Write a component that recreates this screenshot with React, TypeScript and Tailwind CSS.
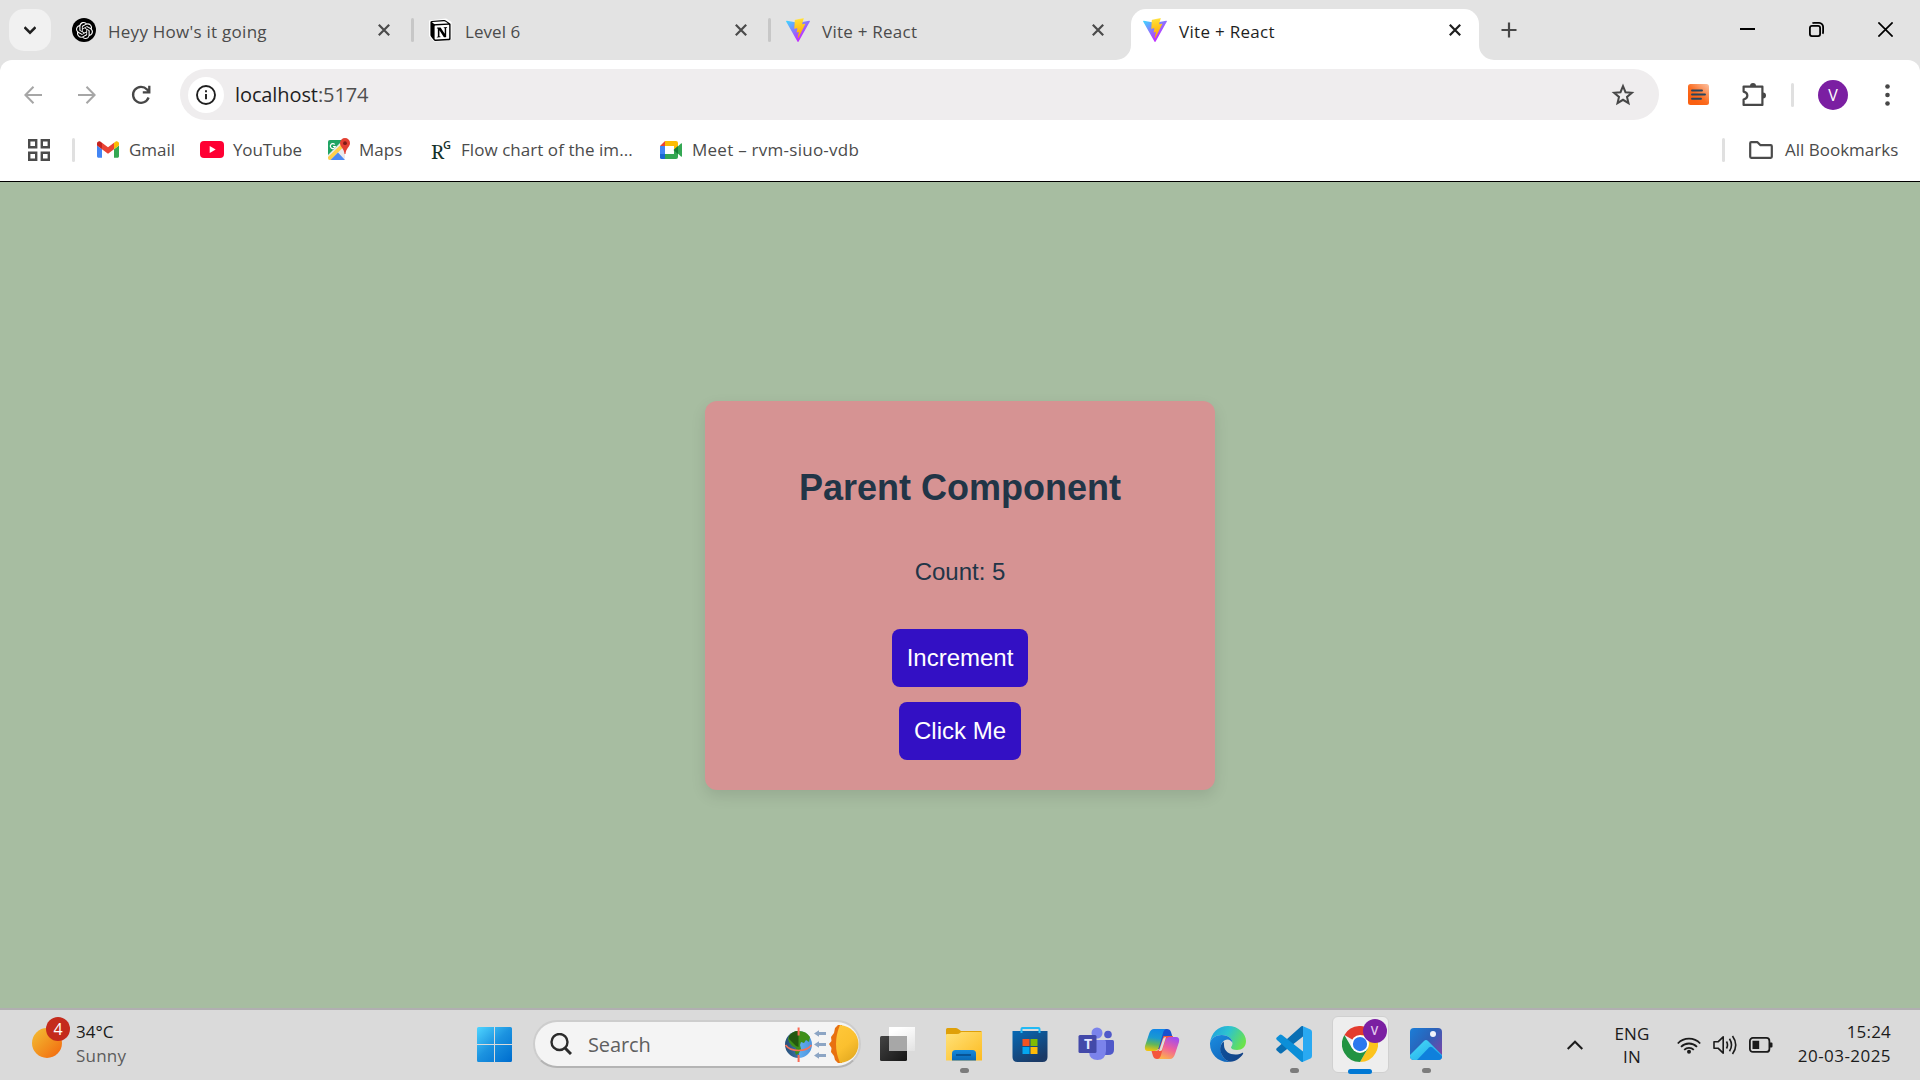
import React, { useState } from "react";
import { SiOpenai, SiNotion } from "react-icons/si";

type IconProps = { className?: string };

const ViteLogo = ({ id }: { id: string }) => (
  <svg className="size-6 shrink-0" viewBox="0 0 256 257">
    <defs>
      <linearGradient id={`${id}a`} x1="0" x2=".58" y1=".08" y2=".8">
        <stop offset="0" stopColor="#41D1FF" />
        <stop offset="1" stopColor="#BD34FE" />
      </linearGradient>
      <linearGradient id={`${id}b`} x1=".43" x2=".5" y1=".02" y2=".9">
        <stop offset="0" stopColor="#FFEA83" />
        <stop offset=".083" stopColor="#FFDD35" />
        <stop offset="1" stopColor="#FFA800" />
      </linearGradient>
    </defs>
    <path fill={`url(#${id}a)`} d="M255.153 37.938L134.897 252.976c-2.483 4.44-8.862 4.466-11.382.048L.875 37.958c-2.746-4.814 1.371-10.646 6.827-9.67l120.385 21.517a6.537 6.537 0 0 0 2.322-.004l117.867-21.483c5.438-.991 9.574 4.796 6.877 9.62Z" />
    <path fill={`url(#${id}b)`} d="M185.432.063L96.44 17.501a3.268 3.268 0 0 0-2.634 3.014l-5.474 92.456a3.268 3.268 0 0 0 3.997 3.378l24.777-5.718c2.318-.535 4.413 1.507 3.936 3.838l-7.361 36.047c-.495 2.426 1.782 4.5 4.151 3.78l15.304-4.649c2.372-.72 4.652 1.36 4.15 3.788l-11.698 56.621c-.732 3.542 3.979 5.473 5.943 2.437l1.313-2.028l72.516-144.72c1.215-2.423-.88-5.186-3.54-4.672l-25.505 4.922c-2.396.462-4.435-1.77-3.759-4.114l16.646-57.705c.677-2.35-1.37-4.583-3.769-4.113Z" />
  </svg>
);

const OpenAiBadge = () => (
  <span className="flex size-6 shrink-0 items-center justify-center rounded-full bg-black">
    <SiOpenai className="size-[17px] text-white" />
  </span>
);

const NotionBadge = () => (
  <span className="relative flex size-6 shrink-0 items-center justify-center">
    <svg className="absolute inset-0 size-6" viewBox="0 0 24 24">
      <path d="M0 2.500 17 .5l5.500 3.500v17L18 22.900 5 23.500 0 18z" fill="#fff" />
    </svg>
    <SiNotion className="relative -left-px size-[21px] text-black" />
  </span>
);

const Cross = ({ className }: IconProps) => (
  <svg className={className} viewBox="0 0 12 12" fill="none" stroke="currentColor" strokeWidth="2.2">
    <path d="M.8.8l10.4 10.4M11.2.8L.8 11.2" />
  </svg>
);

const Tab = ({ icon, title, titleClass, active = false }: { icon: React.ReactNode; title: string; titleClass: string; active?: boolean }) => (
  <div className={active ? "relative flex h-[51px] w-[348px] items-start rounded-t-[15px] bg-white px-3 pt-[9px] text-[#1f1f1f]" : "relative flex h-[51px] w-[348px] items-start px-3 pt-[9px] text-[#4b4b4b]"}>
    {active && (
      <>
        <svg className="absolute bottom-0 -left-[15px] size-[15px]" viewBox="0 0 15 15"><path d="M15 0v15H0A15 15 0 0 0 15 0z" fill="#fff" /></svg>
        <svg className="absolute -right-[15px] bottom-0 size-[15px]" viewBox="0 0 15 15"><path d="M0 0v15h15A15 15 0 0 1 0 0z" fill="#fff" /></svg>
      </>
    )}
    {icon}
    <span className={`mt-0.5 ml-3 grow text-[17px] leading-6 whitespace-nowrap ${titleClass}`}>{title}</span>
    <Cross className="mt-1.5 mr-1.5 size-3 shrink-0" />
  </div>
);

const TabSeparator = () => <div className="mx-[3px] mt-[9px] h-6 w-[3px] rounded-full bg-[#c7c7c7]" />;

const TabStrip = () => (
  <div className="flex h-[60px] bg-[#e3e3e3] pt-[9px] pl-[9px]">
    <div className="mr-[9px] flex size-[42px] items-center justify-center rounded-[15px] bg-[#f1f1f1]">
      <svg className="size-3 text-[#1f1f1f]" viewBox="0 0 12 12" fill="none" stroke="currentColor" strokeWidth="2.4"><path d="M.5 3.2L6 8.7l5.500-5.500" /></svg>
    </div>
    <Tab icon={<OpenAiBadge />} title="Heyy How's it going" titleClass="tracking-[0.26px]" />
    <TabSeparator />
    <Tab icon={<NotionBadge />} title="Level 6" titleClass="tracking-[0.05px]" />
    <TabSeparator />
    <Tab icon={<ViteLogo id="v1" />} title="Vite + React" titleClass="tracking-[0.25px]" />
    <div className="w-[9px]" />
    <Tab active icon={<ViteLogo id="v2" />} title="Vite + React" titleClass="tracking-[0.3px]" />
    <svg className="mt-[13px] ml-[22px] size-4 text-[#474747]" viewBox="0 0 16 16" stroke="currentColor" strokeWidth="2.2"><path d="M8 .5v15M.5 8h15" /></svg>
    <div className="ml-auto flex items-start gap-[54px] pt-[13px] pr-[27px] text-black">
      <svg className="size-[15px]" viewBox="0 0 15 15" stroke="currentColor" strokeWidth="2"><path d="M0 7h15" /></svg>
      <svg className="size-[15px]" viewBox="0 0 15 15" fill="none" stroke="currentColor" strokeWidth="1.8"><rect x=".9" y="3.900" width="10.200" height="10.200" rx="2" /><path d="M3.400 1.200C4 .9 4.500.9 5 .9h5a4 4 0 0 1 4.100 4.100v5c0 .6-.1 1.100-.5 1.700" /></svg>
      <svg className="size-[15px]" viewBox="0 0 15 15" fill="none" stroke="currentColor" strokeWidth="1.700"><path d="M.4.4l14.200 14.200M14.600.4L.4 14.600" /></svg>
    </div>
  </div>
);

const Arrow = ({ className }: IconProps) => (
  <svg className={className} viewBox="0 0 18 18" fill="none" stroke="currentColor" strokeWidth="2"><path d="M18 9H1.500M9.500.8L1.400 9l8.100 8.200" /></svg>
);

const Toolbar = () => (
  <div className="flex h-[69px] items-center pt-[9px] pb-[9px] pl-6">
    <Arrow className="size-[18px] text-[#a6a6a6]" />
    <Arrow className="ml-[36px] size-[18px] rotate-180 text-[#a6a6a6]" />
    <svg className="ml-[35px] size-5 text-[#474747]" viewBox="0 0 20 20" fill="none" stroke="currentColor" strokeWidth="2.300"><path d="M17.600 12.500A8 8 0 1 1 16 4.400L18 6.500M18.300.8v6.500h-6.500" /></svg>
    <div className="ml-[29px] flex h-[51px] w-[1479px] items-center rounded-full bg-[#efedee] pr-6 pl-2">
      <div className="flex size-9 items-center justify-center rounded-full bg-white">
        <svg className="size-5 text-[#1f1f1f]" viewBox="0 0 20 20" fill="none" stroke="currentColor" strokeWidth="1.900"><circle cx="10" cy="10" r="9" /><path d="M10 9v5.300M10 5.300v2" /></svg>
      </div>
      <div className="ml-[11px] text-[20px] leading-6 tracking-[-0.1px] whitespace-nowrap text-[#1f1f1f]">
        localhost<span className="text-[#4f4f4f]">:5174</span>
      </div>
      <svg className="ml-auto size-6 text-[#474747]" viewBox="0 0 24 24" fill="none" stroke="currentColor" strokeWidth="2"><path d="M12 3.200l2.500 6 6.400.5-4.900 4.200 1.500 6.300-5.500-3.400-5.500 3.400 1.500-6.300-4.900-4.200 6.400-.5z" /></svg>
    </div>
    <svg className="ml-[29px] size-[21px]" viewBox="0 0 21 21">
      <defs><linearGradient id="ext" x1="1" y1="0" x2=".3" y2=".8"><stop stopColor="#fcc3a4" /><stop offset=".7" stopColor="#fb6b1f" /><stop offset="1" stopColor="#fa6011" /></linearGradient></defs>
      <rect width="21" height="21" rx="2.500" fill="url(#ext)" />
      <path d="M4 6.500h10M4 10.500h13M4 14.800h9" stroke="#27455f" strokeWidth="1.900" strokeLinecap="round" />
    </svg>
    <svg className="ml-8 h-6 w-[26px] text-[#474747]" viewBox="0 0 26 24" fill="none" stroke="currentColor" strokeWidth="2.200">
      <path d="M2.600 3.600h18.800v18.300H2.600v-5.400c5-1.300 5-6.600 0-7.900z" strokeLinejoin="round" />
      <path d="M9 3a3 3 0 0 1 6 0zM22 9.500a3 3 0 0 1 0 6z" fill="currentColor" stroke="none" />
    </svg>
    <div className="ml-[24px] h-6 w-[3px] rounded-full bg-[#e0e0e0]" />
    <div className="ml-6 flex size-[30px] items-center justify-center rounded-full bg-[#7b1fa2] text-[16px] text-white">V</div>
    <svg className="ml-[37px] h-[22px] w-[5px]" viewBox="0 0 5 22" fill="#474747"><circle cx="2.500" cy="2.500" r="2.300" /><circle cx="2.500" cy="11" r="2.300" /><circle cx="2.500" cy="19.500" r="2.300" /></svg>
  </div>
);

const Bookmark = ({ icon, label, labelClass, className }: { icon: React.ReactNode; label: string; labelClass: string; className: string }) => (
  <div className={`flex shrink-0 items-center ${className}`}>
    {icon}
    <span className={`whitespace-nowrap ${labelClass}`}>{label}</span>
  </div>
);

const GmailIcon = () => (
  <svg className="mr-2.5 h-[17px] w-[22px]" viewBox="52 42 88 66">
    <path fill="#4285f4" d="M58 108h14V74L52 59v43c0 3.320 2.690 6 6 6" /><path fill="#34a853" d="M120 108h14c3.320 0 6-2.690 6-6V59l-20 15" />
    <path fill="#fbbc04" d="M120 48v26l20-15v-8c0-7.420-8.470-11.650-14.400-7.200" /><path fill="#ea4335" d="M72 74V48l24 18 24-18v26L96 92" />
    <path fill="#c5221f" d="M52 51v8l20 15V48l-5.600-4.200c-5.940-4.450-14.400-.22-14.400 7.200" />
  </svg>
);

const YouTubeIcon = () => (
  <svg className="mr-[9px] h-[17px] w-6" viewBox="0 0 24 17"><rect width="24" height="17" rx="4" fill="#ff0033" /><path d="M9.700 5v7l6-3.500z" fill="#fff" /></svg>
);

const MapsIcon = () => (
  <svg className="mr-[9px] size-[23px]" viewBox="0 0 23 23">
    <path d="M1 4a2 2 0 0 1 2-2h15v17a3 3 0 0 1-3 3H3a2 2 0 0 1-2-2z" fill="#e8eaed" />
    <path d="M1 4a2 2 0 0 1 2-2h13L1 17z" fill="#1fa463" /><path d="M1 19L15.500 5l2.500 2.500L3.500 22H3a2 2 0 0 1-2-2z" fill="#fdd04b" />
    <path d="M3.500 22l7.500-7.500 7 7.500z" fill="#4a89f3" />
    <path d="M18 0a5 5 0 0 1 5 5c0 4-4 5-4.500 11h-1C17 10 13 9 13 5a5 5 0 0 1 5-5z" fill="#e34133" /><circle cx="18" cy="5.200" r="1.900" fill="#7f1d17" />
    <path d="M7.800 6.500A2.500 2.500 0 1 0 8.300 8.500H6" fill="none" stroke="#fff" strokeWidth="1.200" />
  </svg>
);

const MeetIcon = () => (
  <svg className="mr-2.5 h-[18px] w-[22px]" viewBox="0 0 22 18">
    <path d="M0 5h5v8H0z" fill="#4285f4" /><path d="M0 5l5-5v5z" fill="#ea4335" /><path d="M5 0h11a2 2 0 0 1 2 2v5l-4 2V5H5z" fill="#fbbc04" />
    <path d="M0 13h5v5H1.500A1.500 1.500 0 0 1 0 16.500z" fill="#1967d2" /><path d="M5 13h9V9l4 2v5a2 2 0 0 1-2 2H5z" fill="#34a853" />
    <path d="M14 9l7-6.500c.5-.4 1-.2 1 .5v12c0 .7-.5.900-1 .5z" fill="#34a853" /><path d="M13.500 9L18 5v8z" fill="#188038" />
  </svg>
);

const BookmarksBar = () => (
  <div className="flex h-[52px] items-center pb-[11px] pl-7 text-[17px] leading-6 text-[#4b4b4b]">
    <svg className="size-[22px]" viewBox="0 0 22 22" fill="none" stroke="currentColor" strokeWidth="2.400"><path d="M1.200 1.200h7v7h-7zM13.800 1.200h7v7h-7zM1.200 13.800h7v7h-7zM13.800 13.800h7v7h-7z" /></svg>
    <div className="ml-[22px] h-6 w-[3px] rounded-full bg-[#e0e0e0]" />
    <Bookmark className="ml-[22px] w-[103px]" icon={<GmailIcon />} label="Gmail" labelClass="tracking-[0px]" />
    <Bookmark className="w-[127px]" icon={<YouTubeIcon />} label="YouTube" labelClass="tracking-[-0.15px]" />
    <Bookmark className="w-[104px]" icon={<MapsIcon />} label="Maps" labelClass="tracking-[0px]" />
    <Bookmark
      className="w-[229px]"
      icon={
        <span className="mr-3 flex h-6 w-[18px] font-['Noto_Serif','DejaVu_Serif','Liberation_Serif',serif] text-[#14302a]">
          <span className="mt-[2px] w-3 text-[20px]">R</span>
          <span className="-mt-[5px] font-['Open_Sans',sans-serif] text-[11px] font-semibold">G</span>
        </span>
      }
      label="Flow chart of the im..."
      labelClass="tracking-[0.05px]"
    />
    <Bookmark className="w-[220px]" icon={<MeetIcon />} label="Meet – rvm-siuo-vdb" labelClass="tracking-[0.26px]" />
    <div className="mr-6 ml-auto h-6 w-[3px] rounded-full bg-[#e0e0e0]" />
    <div className="flex w-[171px] items-center">
      <svg className="mr-3 h-[18px] w-6" viewBox="0 0 24 18" fill="none" stroke="currentColor" strokeWidth="2.200" strokeLinejoin="round"><path d="M1.200 2.200q0-1 1-1h6.300l3 3h10.300q1 0 1 1v10.600q0 1-1 1H2.200q-1 0-1-1z" /></svg>
      <span className="tracking-[0px] whitespace-nowrap">All Bookmarks</span>
    </div>
  </div>
);

const Page = () => {
  const [count, setCount] = useState(5);
  return (
    <main className="flex grow justify-center bg-[#a7bda1] font-['Liberation_Sans',Arial,sans-serif] text-[24px] text-[#213547]">
      <section className="mt-[219px] flex h-[389px] w-[510px] flex-col items-center rounded-xl bg-[#d69393] pt-[60px] shadow-[0_6px_15px_rgba(0,0,0,0.1)]">
        <h2 className="text-[36px] leading-[54px] font-bold">Parent Component</h2>
        <p className="mt-[39px] leading-9">Count: {count}</p>
        <button onClick={() => setCount(count + 1)} className="mt-[39px] flex h-[58px] items-center rounded-lg bg-[#3310c4] px-[15px] text-white">Increment</button>
        <button className="mt-[15px] flex h-[58px] items-center rounded-lg bg-[#3310c4] px-[15px] text-white">Click Me</button>
      </section>
    </main>
  );
};

const WindowsIcon = () => (
  <svg className="size-[35px]" viewBox="0 0 35 35">
    <defs><linearGradient id="win" gradientUnits="userSpaceOnUse" x1="0" y1="0" x2="32" y2="35"><stop stopColor="#4fd5ff" /><stop offset=".5" stopColor="#1c93e0" /><stop offset="1" stopColor="#006fcf" /></linearGradient></defs>
    <path fill="url(#win)" d="M1.500 0H17v17H0V1.500A1.500 1.500 0 0 1 1.500 0zM18 0h15.500A1.500 1.500 0 0 1 35 1.500V17H18zM0 18h17v17H1.500A1.500 1.500 0 0 1 0 33.500zM18 18h17v15.500a1.500 1.500 0 0 1-1.500 1.500H18z" />
  </svg>
);

const SearchArt = () => (
  <svg className="h-10 w-[74px]" viewBox="0 0 74 40">
    <defs>
      <linearGradient id="sea"><stop stopColor="#254d76" /><stop offset=".5" stopColor="#3d73a8" /><stop offset=".52" stopColor="#63aef0" /><stop offset="1" stopColor="#4b93dd" /></linearGradient>
      <linearGradient id="sun" x1="0" y1="0" x2=".5" y2="1"><stop stopColor="#ffc83a" /><stop offset=".6" stopColor="#fbc02f" /><stop offset="1" stopColor="#e6ac22" /></linearGradient>
    </defs>
    <circle cx="13.500" cy="20.500" r="13.500" fill="url(#sea)" />
    <path d="M4 12q4-5 9-5 8-.5 12 6l-1 5-3-2-2 3-3-1-1 3 1 4-2 4-3 2-1-3 1-4-4-2-3-4-1-3z" fill="#3f8f1a" />
    <path d="M4 12q4-5 9.500-5v16l-2.500-1-3-3-4-4z" fill="#24580f" />
    <path d="M13.600 3.500v8M13.600 31v7" stroke="#fb6a55" strokeWidth="2" /><path d="M.5 21q4 5.500 13 5.500t13-5.500" fill="none" stroke="#f4735a" strokeWidth="1.700" />
    <path d="M29 9.500l5-3.200v1.700h7v3h-7v1.700zM29 20.500l5-3.200V19h7v3h-7v1.700zM29 31.500l5-3.200V30h7v3h-7v1.700z" fill="#8ca5c4" />
    <path d="M53 1l-3 3-1 5-3 4 .5 4-2.500 3 2.500 4-.5 4 3 4 1 4 3 3h4V1z" fill="#e8710f" />
    <path d="M55 1C66 2 73.500 10 73.500 20S66 38 55 39Q47 20 55 1z" fill="url(#sun)" />
  </svg>
);

const TaskViewIcon = () => (
  <svg className="size-9" viewBox="0 0 36 36">
    <defs><linearGradient id="tv" x2="1" y2="1"><stop stopColor="#444" /><stop offset="1" stopColor="#151515" /></linearGradient><linearGradient id="tw" x1=".5" x2="1" y2="1"><stop stopColor="#fff" /><stop offset="1" stopColor="#e2e2e2" /></linearGradient></defs>
    <rect y="10" width="27" height="25" rx="1.500" fill="url(#tv)" /><path d="M9 1h26v24H9z" fill="url(#tw)" /><path d="M9 10h18v15H9z" fill="#a7a7a7" />
  </svg>
);

const ExplorerIcon = () => (
  <svg className="size-9" viewBox="0 0 36 36">
    <defs><linearGradient id="fo" x2="1" y2="1"><stop stopColor="#ffe27a" /><stop offset="1" stopColor="#fdbb20" /></linearGradient><linearGradient id="fb" x2="0" y2="1"><stop stopColor="#1489dd" /><stop offset="1" stopColor="#0a68b5" /></linearGradient></defs>
    <path d="M0 3.500Q0 2 1.500 2H10q1.500 0 3 1.500L15 5h19.500Q36 5 36 6.500V12H0z" fill="#dfa008" />
    <path d="M0 9q0-1 1-1h10q2 0 3.500-1.500L15.500 6H36v28.500H0z" fill="url(#fo)" />
    <path d="M6 34.500V27.500q0-3.500 3.500-3.500h17q3.500 0 3.500 3.500v7z" fill="url(#fb)" /><path d="M10 29h15" stroke="#07508f" strokeWidth="1.800" />
  </svg>
);

const StoreIcon = () => (
  <svg className="size-9" viewBox="0 0 36 36">
    <defs><linearGradient id="st" x2=".6" y2="1"><stop stopColor="#0669b6" /><stop offset="1" stopColor="#1b3a66" /></linearGradient></defs>
    <path d="M.5 5h35v26q0 5-5 5h-25q-5 0-5-5z" fill="url(#st)" /><path d="M9.500 7V3q0-1 1-1h16q1 0 1 1v4" fill="none" stroke="#22baf5" strokeWidth="2" />
    <path fill="#f35321" d="M10.500 13h7v7h-7z" /><path fill="#80bb03" d="M18.500 13h7v7h-7z" /><path fill="#05a6f0" d="M10.500 21h7v7h-7z" /><path fill="#ffba08" d="M18.500 21h7v7h-7z" />
  </svg>
);

const TeamsIcon = () => (
  <div className="relative size-9">
    <svg className="size-9" viewBox="0 0 36 36">
      <circle cx="30" cy="8.500" r="3.800" fill="#5059c9" /><path d="M25 14h9.500q1.500 0 1.500 1.500V24q0 5-6 5h-5z" fill="#5059c9" />
      <circle cx="19" cy="7" r="5.500" fill="#7b83eb" /><path d="M11 14h15.500q1.500 0 1.500 1.500V25q-.5 9-8.500 9T11 26z" fill="#7b83eb" />
      <rect x=".5" y="9" width="18" height="18" rx="1.500" fill="#4349a9" />
    </svg>
    <span className="absolute top-[9px] left-px w-[18px] text-center text-[14px] leading-[18px] font-bold text-[#e4e6ff]">T</span>
  </div>
);

const CopilotIcon = () => (
  <svg className="size-9" viewBox="0 0 36 36">
    <defs>
      <linearGradient id="c1" x1=".5" x2=".35" y2="1"><stop stopColor="#0f86e8" /><stop offset=".4" stopColor="#1a9ad0" /><stop offset=".7" stopColor="#62b75a" /><stop offset="1" stopColor="#f0c50c" /></linearGradient>
      <linearGradient id="c2" x1=".7" x2=".3" y2="1"><stop stopColor="#a04cf0" /><stop offset=".5" stopColor="#f0609a" /><stop offset="1" stopColor="#fdb24c" /></linearGradient>
    </defs>
    <path d="M14 3h9q3 0 4 3l1.500 5h-4q-3 0-4 3l-3 9H7.500z" fill="#1850cf" />
    <path d="M22 33h-9q-3 0-4-3l-1.500-5h4q3 0 4-3l4-12H29z" fill="#f4553c" />
    <path d="M10 3h13q-3 0-4 4l-4 14q-1 4-5 4H4q-4 0-3-5l4-12q1.500-5 5-5z" fill="url(#c1)" />
    <path d="M26 33H13q3 0 4-4l4-14q1-4 5-4h6q4 0 3 5l-4 12q-1.500 5-5 5z" fill="url(#c2)" />
    <path d="M20 11.500q1-.5 2-.5l-4 13q-.5 1-2 1h-1.500q1-1 1.500-3l3-9z" fill="#dcdcdc" />
  </svg>
);

const EdgeIcon = () => (
  <svg className="size-9" viewBox="0 0 36 36">
    <defs>
      <linearGradient id="e1" x1="0" x2="1" y1=".2" y2=".6"><stop stopColor="#1f9fe0" /><stop offset=".45" stopColor="#2dc3cf" /><stop offset="1" stopColor="#6be34a" /></linearGradient>
      <linearGradient id="e2" x2=".6" y2="1"><stop stopColor="#1b8de0" /><stop offset="1" stopColor="#1268bd" /></linearGradient>
      <linearGradient id="e3" x2="1" y2="0"><stop stopColor="#0f4f9a" /><stop offset="1" stopColor="#134184" /></linearGradient>
    </defs>
    <path d="M0 17C1 7 8 0 18 0c11 0 18 8 18 15 0 6-4 9-9 9-4 0-6-1.500-6-2.500s1.500-1.500 1.500-4.500c0-4-4-8-11-8C6 9 1 12 0 17z" fill="url(#e1)" />
    <path d="M0 17C1 12 6 9 11.500 9c7 0 11 4 11 8-1-2-3-3.500-5-3.500-4 0-7 4-7 9 0 7 4.500 12 10 13.300Q19 36 18 36C8 36 0 28 0 18z" fill="url(#e2)" />
    <path d="M13.500 15.500C10 19 9.500 23 11 27c1.800 5 5.500 8 9.500 8.800C26 35.300 30.500 32 33 28c.5-.8 0-1.500-1-1-7 3.500-18 1-18-8 0-1.500 0-2.500-.5-3.500z" fill="url(#e3)" />
  </svg>
);

const VsCodeIcon = () => (
  <svg className="size-9" viewBox="0 0 36 36">
    <path d="M27 0v10.500L6 27q-1.500 1-2.500 0L.7 24.500q-1-1 0-2.200L25 .5q1-.8 2-.5z" fill="#0a6fb3" />
    <path d="M27 36V25.500L6 9Q4.500 8 3.500 9L.7 11.500q-1 1 0 2.200L25 35.500q1 .8 2 .5z" fill="#0c8fd8" />
    <path d="M26.500 0L34.500 3.500Q36 4.300 36 6v24q0 1.700-1.500 2.500L26.500 36q.5-.3.500-1.500v-33q0-1.200-.5-1.500z" fill="#29a9f2" />
  </svg>
);

const ChromeIcon = () => (
  <svg className="size-9" viewBox="0 0 48 48">
    <path d="M24 24L3.200 12A24 24 0 0 1 44.800 12H24z" fill="#e33b2e" /><path d="M24 12h20.800A24 24 0 0 1 24 48l10.400-18z" fill="#fcc31e" /><path d="M34.400 30L24 48A24 24 0 0 1 3.200 12l10.400 18z" fill="#229342" />
    <circle cx="24" cy="24" r="12" fill="#fff" /><circle cx="24" cy="24" r="9.500" fill="#2b78ee" />
  </svg>
);

const PhotosIcon = () => (
  <svg className="size-8" viewBox="0 0 32 32">
    <defs><linearGradient id="p1" x2="1" y2=".8"><stop stopColor="#1a7ed8" /><stop offset=".5" stopColor="#2b62b8" /><stop offset="1" stopColor="#7a45a8" /></linearGradient><linearGradient id="p2" x2="1" y2="1"><stop stopColor="#4bdcf8" /><stop offset="1" stopColor="#19a4e8" /></linearGradient><clipPath id="pc"><rect width="32" height="32" rx="4" /></clipPath></defs>
    <g clipPath="url(#pc)"><rect width="32" height="32" fill="url(#p1)" /><path d="M-2 29L14 13q2-2 4 0l16 16v5H-2z" fill="url(#p2)" /><path d="M7 32L19 19.500q1.500-1.500 3.500 0L36 32z" fill="#0f80dc" /><circle cx="23" cy="6" r="3" fill="#f0f3fa" /></g>
  </svg>
);

const TaskItem = ({ children, running = false }: { children: React.ReactNode; running?: boolean }) => (
  <div className="relative flex h-[68px] w-[66px] items-center justify-center">
    {children}
    {running && <span className="absolute top-[58px] left-[29px] h-[5px] w-[9px] rounded-full bg-[#7c7c7c]" />}
  </div>
);

const Taskbar = () => (
  <footer className="flex h-[72px] items-start border-t-2 border-[#b1afb1] bg-[#dadada]">
    <div className="flex w-[477px] pt-[9px] pl-8">
      <div className="relative h-[42px] w-[38px]">
        <span className="absolute top-[9px] left-0 size-[30px] rounded-full bg-linear-to-br from-[#f2bf35] via-[#f29420] to-[#f2620c]" />
        <span className="absolute -top-[2px] left-[14px] flex size-6 items-center justify-center rounded-full bg-[#c42b1c] text-[16px] text-white">4</span>
      </div>
      <div className="mt-px ml-[6px] text-[17px] leading-6 text-[#1b1b1b]">
        <div className="tracking-[0px]">34°C</div>
        <div className="tracking-[0.2px] text-[#5c5c5c]">Sunny</div>
      </div>
    </div>
    <div className="flex h-[69px] items-center"><WindowsIcon /></div>
    <div className="mt-[10px] ml-[21px] flex h-[48px] w-[328px] items-center rounded-full border-2 border-[#cdcdcd] border-b-[#b4b4b4] bg-[#f4f4f4] pl-[15px]">
      <svg className="size-[22px] text-[#2b2b2b]" viewBox="0 0 22 22" fill="none" stroke="currentColor" strokeWidth="2.400"><circle cx="9.500" cy="9" r="8" /><path d="M15 15l6 6" strokeWidth="3" /></svg>
      <span className="mt-px ml-4 text-[20px] leading-6 tracking-[-0.1px] text-[#5f5f5f]">Search</span>
      <div className="ml-auto"><SearchArt /></div>
    </div>
    <div className="ml-1 flex">
      <TaskItem><TaskViewIcon /></TaskItem>
      <TaskItem running><ExplorerIcon /></TaskItem>
      <TaskItem><StoreIcon /></TaskItem>
      <TaskItem><TeamsIcon /></TaskItem>
      <TaskItem><CopilotIcon /></TaskItem>
      <TaskItem><EdgeIcon /></TaskItem>
      <TaskItem running><VsCodeIcon /></TaskItem>
      <TaskItem>
        <div className="relative flex size-[57px] items-center justify-center rounded-md border border-[#d0d0d0] bg-[#eeeeee]">
          <ChromeIcon />
          <span className="absolute top-[2px] left-[30px] flex size-6 items-center justify-center rounded-full bg-[#7b1fa2] text-[12px] font-semibold text-[#e3c8ee]">V</span>
          <span className="absolute bottom-[-2px] left-[15px] h-[5px] w-6 rounded-full bg-[#0078d4]" />
        </div>
      </TaskItem>
      <TaskItem running><PhotosIcon /></TaskItem>
    </div>
    <div className="ml-auto flex h-[69px] items-center pr-[29px] text-[17px] leading-6 text-[#1b1b1b]">
      <svg className="h-[10px] w-4" viewBox="0 0 16 10" fill="none" stroke="currentColor" strokeWidth="2"><path d="M.7 9L8 1.700 15.300 9" /></svg>
      <div className="ml-[28px] w-[42px] text-center leading-[23px] tracking-[0.2px]">ENG<br />IN</div>
      <svg className="ml-[24px] h-[18px] w-6" viewBox="0 0 24 18" fill="none" stroke="currentColor" strokeWidth="1.800"><path d="M.8 7.500a15.500 15.500 0 0 1 22.400 0M4 10.800a11.300 11.300 0 0 1 16 0M7.200 13.800a6.800 6.800 0 0 1 9.600 0" /><circle cx="12" cy="15.700" r="2" fill="currentColor" stroke="none" /></svg>
      <svg className="ml-3 h-5 w-6" viewBox="0 0 24 20" fill="none" stroke="currentColor" strokeWidth="1.600" strokeLinejoin="round"><path d="M1 6.800h4l5.200-5v16.400l-5.200-5H1zM13.500 6.500q2 3.500 0 7M16.500 3.800q4 6.200 0 12.400M19.500 1q6.500 9 0 18" /></svg>
      <svg className="ml-3 h-4 w-6" viewBox="0 0 24 16" fill="none" stroke="currentColor" strokeWidth="1.800"><rect x=".9" y=".9" width="19.500" height="14" rx="3" /><path d="M3.500 3.700h6.700V12H3.500zM21 5.500h1.500q1 0 1 1v3q0 1-1 1H21z" fill="currentColor" stroke="none" /></svg>
      <div className="mb-[2px] ml-auto w-[118px] text-right whitespace-nowrap"><span className="tracking-[0.2px]">15:24</span><br /><span className="tracking-[0.45px]">20-03-2025</span></div>
    </div>
  </footer>
);

export default function App() {
  return (
    <div className="flex h-screen w-full flex-col overflow-hidden bg-white font-['Open_Sans','Noto_Sans',sans-serif]">
      <TabStrip />
      <div className="bg-[#e3e3e3]">
        <div className="h-[122px] rounded-t-[12px] border-b border-black bg-white">
          <Toolbar />
          <BookmarksBar />
        </div>
      </div>
      <Page />
      <Taskbar />
    </div>
  );
}
